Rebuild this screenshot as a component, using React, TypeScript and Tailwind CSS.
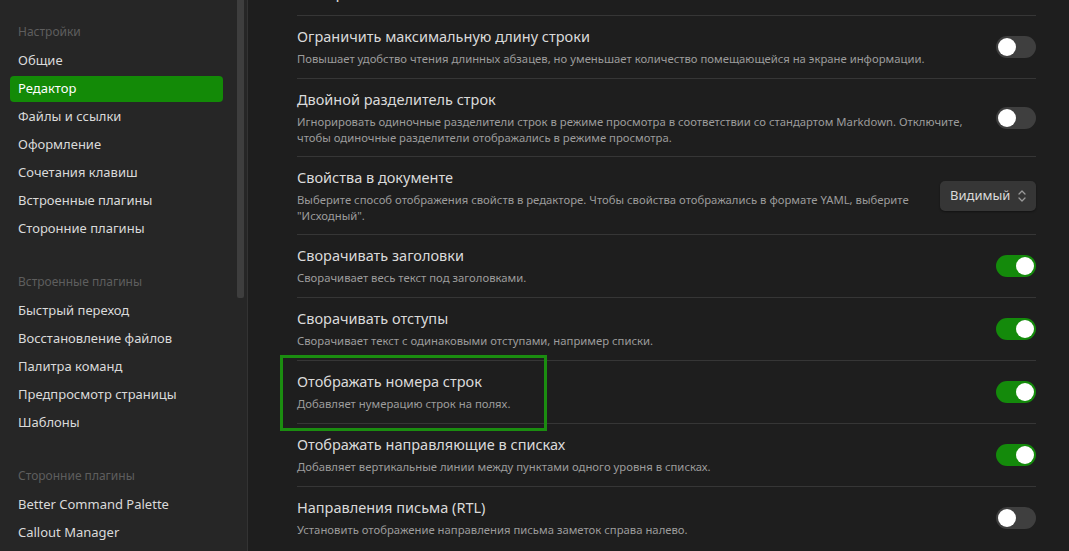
import React from "react";

type Setting = {
  title: string;
  desc: string[];
  control: "on" | "off" | "select";
};

const settings: Setting[] = [
  {
    title: "Ограничить максимальную длину строки",
    desc: [
      "Повышает удобство чтения длинных абзацев, но уменьшает количество помещающейся на экране информации.",
    ],
    control: "off",
  },
  {
    title: "Двойной разделитель строк",
    desc: [
      "Игнорировать одиночные разделители строк в режиме просмотра в соответствии со стандартом Markdown. Отключите,",
      "чтобы одиночные разделители отображались в режиме просмотра.",
    ],
    control: "off",
  },
  {
    title: "Свойства в документе",
    desc: [
      "Выберите способ отображения свойств в редакторе. Чтобы свойства отображались в формате YAML, выберите",
      "\"Исходный\".",
    ],
    control: "select",
  },
  {
    title: "Сворачивать заголовки",
    desc: ["Сворачивает весь текст под заголовками."],
    control: "on",
  },
  {
    title: "Сворачивать отступы",
    desc: ["Сворачивает текст с одинаковыми отступами, например списки."],
    control: "on",
  },
  {
    title: "Отображать номера строк",
    desc: ["Добавляет нумерацию строк на полях."],
    control: "on",
  },
  {
    title: "Отображать направляющие в списках",
    desc: ["Добавляет вертикальные линии между пунктами одного уровня в списках."],
    control: "on",
  },
  {
    title: "Направления письма (RTL)",
    desc: ["Установить отображение направления письма заметок справа налево."],
    control: "off",
  },
];

const groups = [
  {
    header: "Настройки",
    items: [
      "Общие",
      "Редактор",
      "Файлы и ссылки",
      "Оформление",
      "Сочетания клавиш",
      "Встроенные плагины",
      "Сторонние плагины",
    ],
  },
  {
    header: "Встроенные плагины",
    items: [
      "Быстрый переход",
      "Восстановление файлов",
      "Палитра команд",
      "Предпросмотр страницы",
      "Шаблоны",
    ],
  },
  {
    header: "Сторонние плагины",
    items: ["Better Command Palette", "Callout Manager"],
  },
];

const Toggle: React.FC<{ on: boolean }> = ({ on }) => (
  <div
    className={`w-[40px] h-[22px] rounded-full flex items-center px-[2px] ${
      on ? "bg-[#148a0b] justify-end" : "bg-[#3f3f3f] justify-start"
    }`}
  >
    <div className="w-[18px] h-[18px] rounded-full bg-white" />
  </div>
);

const Select: React.FC = () => (
  <div className="w-[96px] h-[30px] rounded-[5px] bg-[#363636] flex items-center justify-between pl-[10px] pr-[9px] text-[13px] text-[#dadada] shadow-[0_1px_2px_rgba(0,0,0,0.4)]">
    <span>Видимый</span>
    <svg width="10" height="14" viewBox="0 0 10 14" fill="none" stroke="#9a9a9a" strokeWidth="1.3" strokeLinecap="round" strokeLinejoin="round">
      <path d="M2 5 L5 2 L8 5" />
      <path d="M2 9 L5 12 L8 9" />
    </svg>
  </div>
);

export default function App() {
  return (
    <div
      className="w-[1069px] h-[551px] flex overflow-hidden bg-[#1e1e1e]"
      style={{ fontFamily: '"Noto Sans", "Open Sans", sans-serif' }}
    >
      {/* sidebar */}
      <aside className="flex h-full bg-[#262626] border-r border-[#333333]">
        <div className="w-[237px] pl-[10px] pr-[14px] pt-[20px] overflow-hidden">
          {groups.map((g, gi) => (
            <div key={g.header} className={`flex flex-col ${gi === 0 ? "" : "mt-[27px]"}`}>
              <div className="h-6 flex items-center pl-2 mb-[3px] text-[12px] text-[#5e5e5e]">
                {g.header}
              </div>
              {g.items.map((item) => (
                <div
                  key={item}
                  className={`h-[26px] my-[1px] pl-2 flex items-center rounded-[4px] text-[13px] whitespace-nowrap ${
                    item === "Редактор" && gi === 0
                      ? "bg-[#138a07] text-white"
                      : "text-[#dadada]"
                  }`}
                >
                  {item}
                </div>
              ))}
            </div>
          ))}
        </div>
        <div className="w-[10px] h-full flex flex-col">
          <div className="w-[7px] h-[298px] bg-[#3e3e3e] rounded-b-[2px]" />
        </div>
      </aside>

      {/* main */}
      <main className="flex-1 relative overflow-hidden pl-[49px] pr-[33px]">
        <div className="-mt-[19px] pb-[12px] text-[16px] leading-[22px] text-[#dadada]">
          Отображение
        </div>
        {settings.map((s) => (
          <div
            key={s.title}
            className={`border-t border-[#363636] flex items-center gap-6 ${
              s.desc.length > 1 ? "h-[78px]" : "h-[63px]"
            }`}
          >
            <div className="flex-1 min-w-0 pb-[2px]">
              <div className="text-[14.5px] leading-[22px] mb-[4px] text-[#dadada]">{s.title}</div>
              {s.desc.map((d) => (
                <div key={d} className="text-[11.3px] leading-[16px] text-[#9c9c9c] whitespace-nowrap">
                  {d}
                </div>
              ))}
            </div>
            <div className="shrink-0">
              {s.control === "select" ? <Select /> : <Toggle on={s.control === "on"} />}
            </div>
          </div>
        ))}

        {/* annotation */}
        <div className="absolute left-[32px] top-[355px] w-[267px] h-[76px] border-[3px] border-[#1b8d10] pointer-events-none" />
      </main>
    </div>
  );
}
